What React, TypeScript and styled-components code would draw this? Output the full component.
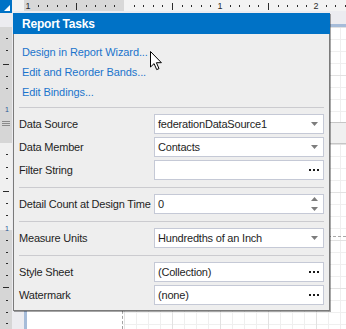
import { FC } from 'react';
import styled, { createGlobalStyle } from 'styled-components';

const GlobalStyle = createGlobalStyle`
  html, body { margin: 0; padding: 0; background: #ffffff; }
  body { font-family: "Liberation Sans", Arial, sans-serif; }
`;

const Screen = styled.div`
  position: relative;
  width: 346px;
  height: 329px;
  overflow: hidden;
  display: grid;
  grid-template-columns: 12px 1fr;
  grid-template-rows: 13px 1fr;
  background: #ececf0;
`;

const Corner = styled.div`
  background: #0072c6;
  display: flex;
  align-items: flex-end;
  justify-content: flex-end;
  padding: 0 2px 2px 0;
`;

const RulerSvg = styled.svg`
  display: block;
`;

const Surface = styled.div`
  padding: 11px 0 0 12px;
  display: flex;
  flex-direction: column;
  background: #ececf0;
`;

const Page = styled.div`
  flex: 1;
  display: flex;
  flex-direction: column;
  background: #ffffff;
  border-top: 3px solid #a6bcd9;
  border-left: 3px solid #a6bcd9;
`;

const Band = styled.div<{ $height?: number }>`
  display: grid;
  grid-template-columns: 95px 1fr;
  height: ${(p) => (p.$height ? `${p.$height}px` : 'auto')};
  flex: ${(p) => (p.$height ? '0 0 auto' : '1')};
`;

const BandMargin = styled.div`
  background: #ffffff;
`;

const BandGrid = styled.div`
  border-left: 1px dashed #a3a3a3;
  background-color: #ffffff;
  background-image: linear-gradient(to right, #e2e2e2 1px, transparent 1px),
    linear-gradient(to bottom, #e2e2e2 1px, transparent 1px),
    linear-gradient(to right, #efefef 1px, transparent 1px),
    linear-gradient(to bottom, #efefef 1px, transparent 1px);
  background-size: 48px 48px, 48px 48px, 12px 12px, 12px 12px;
  background-position: 1px 0;
`;

const BandStrip = styled.div`
  height: 20px;
  background: #f0f0f0;
  border-top: 1px solid #c6c6c6;
  border-bottom: 1px solid #c6c6c6;
  box-sizing: border-box;
  height: 22px;
`;

const ControlOutline = styled.div`
  margin: 92px 0 0 150px;
  height: 40px;
  border-top: 1px dashed #a8a8a8;
`;

const Popup = styled.div`
  position: absolute;
  left: 13px;
  top: 13px;
  width: 317px;
  display: flex;
  flex-direction: column;
  box-shadow: 1px 1px 0 rgba(0, 0, 0, 0.35);
`;

const Header = styled.div`
  height: 21px;
  background: #0072c6;
  color: #ffffff;
  font-weight: bold;
  font-size: 12px;
  letter-spacing: -0.2px;
  display: flex;
  align-items: center;
  padding-left: 9px;
`;

const Body = styled.div`
  background: #eeeeee;
  border: 1px solid #7a7a7a;
  border-top: none;
  padding: 0 5px;
  font-size: 11px;
  letter-spacing: -0.2px;
  color: #1e1e1e;
`;

const LinkList = styled.div`
  display: flex;
  flex-direction: column;
  padding: 8px 0 5px 3px;
`;

const Link = styled.a`
  height: 20px;
  line-height: 20px;
  color: #1b74cc;
  text-decoration: none;
  letter-spacing: -0.1px;
  cursor: pointer;
`;

const Separator = styled.div`
  height: 1px;
  background: #cbcbcf;
`;

const Section = styled.div`
  display: grid;
  grid-template-columns: 135px 170px;
  grid-auto-rows: 20px;
  row-gap: 3px;
  align-items: center;
  padding: 6px 0 7px;
  &:last-child {
    padding-bottom: 5px;
  }
`;

const Label = styled.span`
  white-space: nowrap;
`;

const Field = styled.div`
  height: 20px;
  box-sizing: border-box;
  border: 1px solid #c5c9d6;
  background: #ffffff;
  display: flex;
  align-items: center;
  padding: 0 5px 0 3px;
  white-space: nowrap;
`;

const FieldText = styled.span`
  flex: 1;
  color: #1e1e1e;
`;

const Cursor = styled.svg`
  position: absolute;
  left: 150px;
  top: 51px;
`;

type FieldKind = 'drop' | 'dots' | 'spin';

const FieldIcon: FC<{ kind: FieldKind }> = ({ kind }) => {
  if (kind === 'drop') {
    return (
      <svg width="7" height="4" viewBox="0 0 7 4">
        <path d="M0 0h7L3.5 4z" fill="#7d7d7d" />
      </svg>
    );
  }
  if (kind === 'dots') {
    return (
      <svg width="10" height="2" viewBox="0 0 10 2" style={{ marginRight: -1 }}>
        <rect x="0" y="0" width="2" height="2" fill="#1a1a1a" />
        <rect x="4" y="0" width="2" height="2" fill="#1a1a1a" />
        <rect x="8" y="0" width="2" height="2" fill="#1a1a1a" />
      </svg>
    );
  }
  return (
    <svg width="7" height="14" viewBox="0 0 7 14">
      <path d="M0 4h7L3.5 0z" fill="#7d7d7d" />
      <path d="M0 10h7L3.5 14z" fill="#7d7d7d" />
    </svg>
  );
};

const Row: FC<{ label: string; value?: string; kind: FieldKind }> = ({ label, value, kind }) => (
  <>
    <Label>{label}</Label>
    <Field>
      <FieldText>{value}</FieldText>
      <FieldIcon kind={kind} />
    </Field>
  </>
);

const TopRuler: FC = () => {
  const marks = [];
  for (let k = -10; k <= 23; k++) {
    const x = Math.round(124 + 9.6 * k);
    if (k === 0) continue;
    if (k % 10 === 0) {
      marks.push(
        <text key={k} x={x} y={9} fontSize="9" fill="#2b2b2b" textAnchor="middle" fontFamily="Liberation Sans, Arial, sans-serif">
          {Math.abs(k / 10)}
        </text>,
      );
    } else if (k % 5 === 0) {
      marks.push(<rect key={k} x={x} y={3} width={1} height={7} fill="#2b2b2b" />);
    } else {
      marks.push(<rect key={k} x={x} y={5} width={1} height={2} fill="#2b2b2b" />);
    }
  }
  return (
    <RulerSvg width="334" height="13" viewBox="12 0 334 13">
      <rect x="12" y="0" width="334" height="13" fill="#ececf0" />
      <rect x="12" y="0" width="334" height="11" fill="#f3f3f3" />
      <rect x="24" y="0" width="100" height="11" fill="#d8d8d8" />
      {marks}
    </RulerSvg>
  );
};

const LeftRuler: FC = () => {
  const small = [38, 50, 76, 88, 154, 167, 178, 203, 215, 240, 252, 263, 275, 300, 312, 323];
  const long = [64, 191, 287];
  return (
    <RulerSvg width="12" height="316" viewBox="0 13 12 316">
      <rect x="0" y="13" width="12" height="316" fill="#ececf0" />
      <rect x="0" y="27" width="12" height="116" fill="#d6d6d6" />
      <rect x="0" y="143" width="12" height="87" fill="#f0f0f0" />
      <rect x="0" y="230" width="12" height="99" fill="#d6d6d6" />
      {small.map((y) => (
        <rect key={y} x="6" y={y} width="2" height="1" fill="#2b2b2b" />
      ))}
      {long.map((y) => (
        <rect key={y} x="3" y={y} width="6" height="1" fill="#2b2b2b" />
      ))}
      {[109, 228].map((y) => (
        <text key={y} x="7" y={y + 3} fontSize="7" fill="#2d5a96" textAnchor="middle" fontFamily="Liberation Sans, Arial, sans-serif">
          1
        </text>
      ))}
      <rect x="2" y="121" width="8" height="1" fill="#8a8a8a" />
      <rect x="2" y="123" width="8" height="1" fill="#8a8a8a" />
      <rect x="2" y="125" width="8" height="1" fill="#8a8a8a" />
    </RulerSvg>
  );
};

const App: FC = () => (
  <>
    <GlobalStyle />
    <Screen>
      <Corner>
        <svg width="6" height="6" viewBox="0 0 6 6">
          <path d="M6 0v6H0z" fill="#ffffff" />
        </svg>
      </Corner>
      <TopRuler />
      <LeftRuler />
      <Surface>
        <Page>
          <Band $height={95}>
            <BandMargin />
            <BandGrid />
          </Band>
          <BandStrip />
          <Band>
            <BandMargin />
            <BandGrid>
              <ControlOutline />
            </BandGrid>
          </Band>
        </Page>
      </Surface>

      <Popup>
        <Header>Report Tasks</Header>
        <Body>
          <LinkList>
            <Link>Design in Report Wizard...</Link>
            <Link>Edit and Reorder Bands...</Link>
            <Link>Edit Bindings...</Link>
          </LinkList>
          <Separator />
          <Section>
            <Row label="Data Source" value="federationDataSource1" kind="drop" />
            <Row label="Data Member" value="Contacts" kind="drop" />
            <Row label="Filter String" kind="dots" />
          </Section>
          <Separator />
          <Section>
            <Row label="Detail Count at Design Time" value="0" kind="spin" />
          </Section>
          <Separator />
          <Section>
            <Row label="Measure Units" value="Hundredths of an Inch" kind="drop" />
          </Section>
          <Separator />
          <Section>
            <Row label="Style Sheet" value="(Collection)" kind="dots" />
            <Row label="Watermark" value="(none)" kind="dots" />
          </Section>
        </Body>
      </Popup>

      <Cursor width="13" height="20" viewBox="0 0 13 20">
        <path d="M0.5 0.5v15.5l3.6-3.4 2.6 6 2.3-1-2.6-5.9h5z" fill="#ffffff" stroke="#000000" strokeWidth="1" strokeLinejoin="miter" />
      </Cursor>
    </Screen>
  </>
);

export default App;
